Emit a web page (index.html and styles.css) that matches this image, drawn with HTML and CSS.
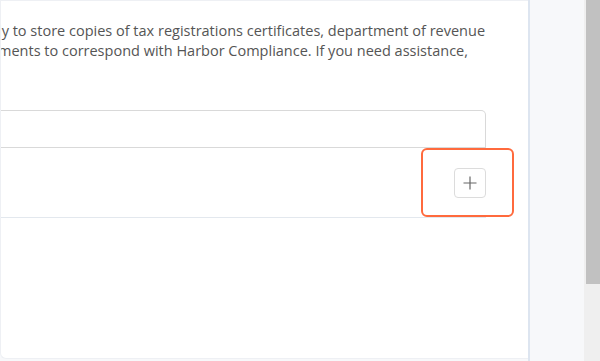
FILE: index.html
```html
<!DOCTYPE html>
<html lang="en">
<head>
    <meta charset="UTF-8">
    <meta name="viewport" content="width=device-width, initial-scale=1.0">
    <title>Documents</title>
    <link rel="stylesheet" href="styles.css">
</head>
<body>

    <div class="main">
        <div class="panel">
            <p class="intro">
                <span class="line line-1">ly to store copies of tax registrations certificates, department of revenue</span>
                <span class="line line-2">ments to correspond with Harbor Compliance. If you need assistance,</span>
            </p>

            <div class="field">
                <div class="field-head"></div>
                <div class="field-row">
                    <button class="add-btn" title="Add">
                        <svg width="16" height="16" viewBox="0 0 16 16">
                            <path d="M8 1.5v13M1.5 8h13" stroke="#666" stroke-width="1.2" fill="none"/>
                        </svg>
                        <span class="highlight"></span>
                    </button>
                </div>
            </div>
        </div>
    </div>

    <div class="sidebar"></div>

    <div class="scrollbar">
        <div class="thumb"></div>
    </div>

</body>
</html>
```

FILE: styles.css
```css
body {
    font-family: "Open Sans", Lato, sans-serif;
    background-color: #f7f8fa;
    margin: 0;
    padding: 0;
    display: flex;
    height: 361px;
    overflow: hidden;
}

.main {
    width: 528px;
    flex-shrink: 0;
}

.panel {
    height: 357px;
    background: white;
    border: 1px solid #eef0f4;
    border-right: none;
    border-bottom-left-radius: 6px;
    overflow: hidden;
}

.intro {
    margin: 20px 0 0 0;
    font-size: 14.5px;
    line-height: 20px;
    color: #555;
    white-space: nowrap;
}

.line {
    display: block;
}

.line-1 {
    margin-left: -3px;
}

.line-2 {
    margin-left: -3px;
}

.field {
    width: 485px;
    margin-top: 49px;
}

.field-head {
    height: 36px;
    border: 1px solid #d9d9d9;
    border-left: none;
    border-top-right-radius: 5px;
}

.field-row {
    height: 69px;
    border-bottom: 1px solid #e3e8ee;
    display: flex;
    justify-content: flex-end;
    align-items: center;
}

.add-btn {
    position: relative;
    width: 32px;
    height: 30px;
    padding: 0;
    background: white;
    border: 1px solid #dcdcdc;
    border-radius: 4px;
    display: flex;
    align-items: center;
    justify-content: center;
    cursor: pointer;
}

.highlight {
    position: absolute;
    top: -21px;
    left: -34px;
    right: -29px;
    bottom: -20px;
    border: 2px solid #ff6a3d;
    border-radius: 6px;
    pointer-events: none;
}

.sidebar {
    width: 54px;
    flex-shrink: 0;
    background: #f7f8fa;
    border-left: 2px solid #dde5f0;
}

.scrollbar {
    width: 16px;
    flex-shrink: 0;
    background: #efefef;
    display: flex;
    flex-direction: column;
}

.thumb {
    flex: 0 0 284px;
    width: 14px;
    margin-left: 2px;
    background: #c1c1c1;
}
```
